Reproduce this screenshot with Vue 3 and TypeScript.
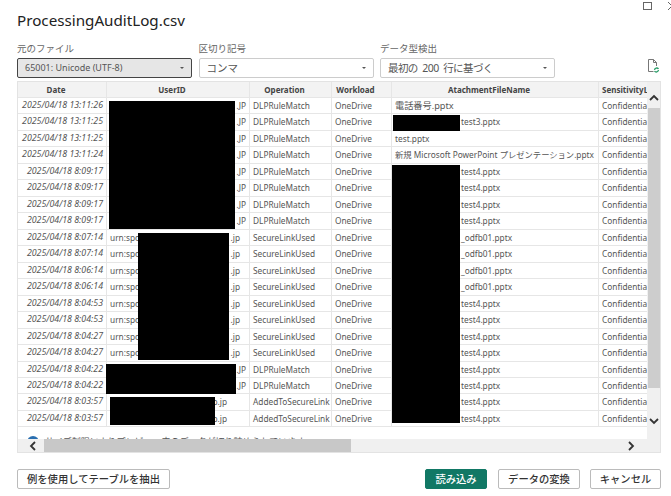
<template>
  <div class="dialog">
    <div class="window-btns">
      <svg width="9" height="8" viewBox="0 0 9 8"><rect x="0.500" y="0.500" width="8" height="7" fill="none" stroke="#666" /></svg>
      <svg width="8" height="8" viewBox="0 0 8 8"><path d="M0 0L8 8M8 0L0 8" stroke="#666" fill="none" /></svg>
    </div>
    <h1 class="title">ProcessingAuditLog.csv</h1>

    <div class="options">
      <div class="field">
        <label>元のファイル</label>
        <div class="select active">65001: Unicode (UTF-8)<span class="caret"></span></div>
      </div>
      <div class="field">
        <label>区切り記号</label>
        <div class="select large">コンマ<span class="caret"></span></div>
      </div>
      <div class="field">
        <label>データ型検出</label>
        <div class="select large tight">最初の 200 行に基づく<span class="caret"></span></div>
      </div>
      <svg class="refresh" width="13" height="14" viewBox="0 0 13 14">
        <path d="M1.500 .5h5l3 3V7M1.500 .5v12h5M6.500 .5v3h3" fill="none" stroke="#777" />
        <path d="M7.500 11a2.200 2.200 0 0 1 4 -1M11.500 11a2.200 2.200 0 0 1 -4 1" fill="none" stroke="#2e9e6b" stroke-width="1.300" />
      </svg>
    </div>

    <div class="table-box">
      <div class="row head">
        <div v-for="c in columns" :key="c" class="cell">{{ c }}</div>
      </div>
      <div v-for="(r, i) in rows" :key="i" class="row">
        <div class="cell date">{{ r.date }}</div>
        <div class="cell user" :class="r.userClass">
          <span>{{ r.user }}</span>
          <span>{{ r.tail }}</span>
        </div>
        <div class="cell">{{ r.op }}</div>
        <div class="cell">OneDrive</div>
        <div class="cell" :class="{ indent: r.indent, big: !r.indent && r.file.startsWith('電') }">{{ r.file }}</div>
        <div class="cell clip">Confidential</div>
      </div>
      <div class="notice">
        <svg width="12" height="12" viewBox="0 0 12 12"><circle cx="6" cy="6" r="6" fill="#2a6fb0" /><circle cx="6" cy="7" r="3.500" fill="#fff" /></svg>
        <span>サイズ制限によりプレビュー内のデータが切り詰められています。</span>
      </div>

      <div class="vbar">
        <svg width="12" height="8" viewBox="0 0 12 8"><path d="M2 6l4-4 4 4" fill="none" stroke="#333" stroke-width="1.800" /></svg>
        <div class="vthumb"></div>
        <svg width="12" height="8" viewBox="0 0 12 8"><path d="M2 2l4 4 4-4" fill="none" stroke="#333" stroke-width="1.800" /></svg>
      </div>
      <div class="hbar">
        <svg width="8" height="12" viewBox="0 0 8 12"><path d="M6 2L2 6l4 4" fill="none" stroke="#333" stroke-width="1.800" /></svg>
        <div class="hthumb"></div>
        <svg width="8" height="12" viewBox="0 0 8 12"><path d="M2 2l4 4-4 4" fill="none" stroke="#333" stroke-width="1.800" /></svg>
      </div>

      <div v-for="(b, i) in redactions" :key="i" class="redact" :style="b"></div>
    </div>

    <div class="footer">
      <button class="btn extract">例を使用してテーブルを抽出</button>
      <button class="btn primary">読み込み</button>
      <button class="btn convert">データの変換</button>
      <button class="btn cancel">キャンセル</button>
    </div>
  </div>
</template>

<script setup lang="ts">
interface Row {
  date: string
  user: string
  tail: string
  userClass: string
  op: string
  file: string
  indent: boolean
}

const columns = ['Date', 'UserID', 'Operation', 'Workload', 'AtachmentFileName', 'SensitivityLabel']

const match = (date: string, file: string, indent = true): Row => ({
  date, user: '', tail: '.JP', userClass: '', op: 'DLPRuleMatch', file, indent,
})
const link = (date: string, file: string): Row => ({
  date, user: 'urn:spo', tail: '.jp', userClass: 'urn', op: 'SecureLinkUsed', file, indent: true,
})
const added = (date: string): Row => ({
  date, user: '', tail: 'p.jp', userClass: 'short', op: 'AddedToSecureLink', file: 'test4.pptx', indent: true,
})

const rows: Row[] = [
  match('2025/04/18 13:11:26', '電話番号.pptx', false),
  match('2025/04/18 13:11:25', 'test3.pptx'),
  match('2025/04/18 13:11:25', 'test.pptx', false),
  match('2025/04/18 13:11:24', '新規 Microsoft PowerPoint プレゼンテーション.pptx', false),
  match('2025/04/18 8:09:17', 'test4.pptx'),
  match('2025/04/18 8:09:17', 'test4.pptx'),
  match('2025/04/18 8:09:17', 'test4.pptx'),
  match('2025/04/18 8:09:17', 'test4.pptx'),
  link('2025/04/18 8:07:14', '_odfb01.pptx'),
  link('2025/04/18 8:07:14', '_odfb01.pptx'),
  link('2025/04/18 8:06:14', '_odfb01.pptx'),
  link('2025/04/18 8:06:14', '_odfb01.pptx'),
  link('2025/04/18 8:04:53', 'test4.pptx'),
  link('2025/04/18 8:04:53', 'test4.pptx'),
  link('2025/04/18 8:04:27', 'test4.pptx'),
  link('2025/04/18 8:04:27', 'test4.pptx'),
  match('2025/04/18 8:04:22', 'test4.pptx'),
  match('2025/04/18 8:04:22', 'test4.pptx'),
  added('2025/04/18 8:03:57'),
  added('2025/04/18 8:03:57'),
]

// black boxes over the masked cells, relative to the table box
const box = (x: number, y: number, w: number, h: number) => ({
  left: `${x - 18}px`,
  top: `${y - 82}px`,
  width: `${w}px`,
  height: `${h}px`,
})

const redactions = [
  box(109, 101, 126, 128),
  box(138, 233, 91, 127),
  box(106, 364, 130, 30),
  box(110, 397, 105, 28),
  box(393, 115, 67, 16),
  box(392, 165, 68, 258),
]
</script>

<style scoped>
.dialog {
  position: relative;
  width: 671px;
  height: 496px;
  box-sizing: border-box;
  padding: 0 10px 0 17px;
  background: #fff;
  font-family: "Noto Sans", "Noto Sans CJK JP", sans-serif;
  color: #333;
  overflow: hidden;
}

.window-btns {
  position: absolute;
  top: 2px;
  right: -5px;
  display: flex;
  gap: 16px;
}

.title {
  margin: 0;
  padding-top: 10px;
  padding-bottom: 1px;
  font-size: 15.200px;
  line-height: 20px;
  font-weight: 400;
  color: #222;
}

.options {
  position: relative;
  display: flex;
  align-items: flex-end;
  gap: 6.500px;
  margin-top: 9px;
  height: 38px;
}

.field {
  width: 175px;
}

.field label {
  display: block;
  font-size: 9.500px;
  line-height: 14px;
  color: #666;
  margin-bottom: 2px;
}

.select {
  position: relative;
  box-sizing: border-box;
  height: 20px;
  line-height: 18px;
  padding-left: 7px;
  font-size: 9px;
  color: #555;
  border: 1px solid #ccc;
  border-radius: 2px;
}

.select.large {
  font-size: 10.500px;
}

.select.tight {
  letter-spacing: -0.600px;
  word-spacing: 2.500px;
}

.select.active {
  background: #e6e6e6;
  border-color: #444;
}

.caret {
  position: absolute;
  right: 7px;
  top: 8px;
  border-left: 2px solid transparent;
  border-right: 2px solid transparent;
  border-top: 2px solid #555;
}

.refresh {
  margin-left: 85px;
  margin-bottom: 5px;
}

.table-box {
  position: relative;
  width: 644px;
  height: 372px;
  margin-top: 3px;
  box-sizing: border-box;
  border: 1px solid #e3e3e3;
  overflow: hidden;
}

.row {
  display: grid;
  grid-template-columns: 89px 143px 82px 60px 207px 48px;
  height: 16.470px;
  border-bottom: 1px solid #e6e6e6;
  box-sizing: border-box;
}

.row.head {
  height: 16px;
  background: #f3f3f3;
}

.cell {
  box-sizing: border-box;
  padding: 0 3px;
  border-right: 1px solid #e6e6e6;
  font-size: 8.300px;
  line-height: 15px;
  white-space: nowrap;
  overflow: hidden;
  color: #555;
}

.head .cell {
  padding: 0 12px 0 0;
  text-align: center;
  font-weight: 700;
  font-size: 8px;
  color: #444;
}

.head .cell:last-child {
  padding: 0 0 0 3px;
  text-align: left;
  border-right: none;
}

.cell.date {
  text-align: right;
  font-style: italic;
  font-size: 8.800px;
}

.cell.user {
  display: flex;
  justify-content: space-between;
  padding-right: 3px;
}

.cell.urn {
  padding-right: 9px;
}

.cell.short {
  padding-right: 22px;
}

.cell.indent {
  padding-left: 69px;
}

.cell.big {
  font-size: 9.200px;
}

.cell.clip {
  border-right: none;
}

.notice {
  position: absolute;
  left: 9px;
  top: 354px;
  display: flex;
  align-items: center;
  gap: 6px;
  font-size: 9px;
  line-height: 12px;
  color: #555;
  white-space: nowrap;
}

.vbar {
  position: absolute;
  right: 0;
  top: 0;
  bottom: 0;
  width: 13px;
  background: #f0f0f0;
  display: flex;
  flex-direction: column;
  align-items: center;
  padding: 12px 0 27px;
  box-sizing: border-box;
}

.vthumb {
  flex: 1;
  width: 12px;
  background: #cdcdcd;
  margin: 6px 0 29px;
}

.hbar {
  position: absolute;
  left: 0;
  right: 13px;
  bottom: 0;
  height: 13px;
  background: #f0f0f0;
  display: flex;
  align-items: center;
  padding: 0 12px 0 11px;
  box-sizing: border-box;
}

.hthumb {
  width: 307px;
  height: 100%;
  margin: 0 auto 0 7px;
  background: #c8c8c8;
}

.redact {
  position: absolute;
  background: #000;
}

.footer {
  display: flex;
  align-items: center;
  margin-top: 16px;
}

.btn {
  box-sizing: border-box;
  height: 20px;
  padding: 0;
  font-family: inherit;
  font-size: 10.300px;
  font-weight: 500;
  line-height: 18px;
  color: #333;
  background: #fff;
  border: 1px solid #bbb;
  border-radius: 2px;
}

.btn.extract {
  width: 153px;
  margin-right: auto;
}

.btn.primary {
  width: 62px;
  color: #fff;
  background: #117865;
  border-color: #117865;
}

.btn.convert {
  width: 82px;
  margin: 0 10px 0 11px;
}

.btn.cancel {
  width: 71px;
}
</style>

<style>
body {
  background: #fff;
}
</style>
